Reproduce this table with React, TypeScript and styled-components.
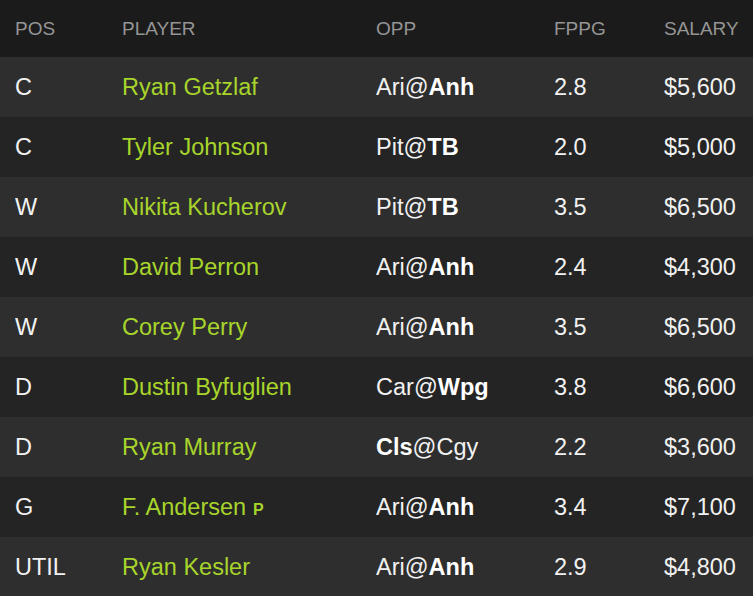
import React from "react";
import styled, { createGlobalStyle } from "styled-components";

const GlobalStyle = createGlobalStyle`
  html, body {
    margin: 0;
    padding: 0;
    background: #1b1b1b;
    font-family: "Liberation Sans", Arial, sans-serif;
  }
`;

type Player = {
  pos: string;
  name: string;
  away: string;
  home: string;
  homeBold: boolean;
  fppg: string;
  salary: string;
  badge?: string;
};

const players: Player[] = [
  { pos: "C", name: "Ryan Getzlaf", away: "Ari", home: "Anh", homeBold: true, fppg: "2.8", salary: "$5,600" },
  { pos: "C", name: "Tyler Johnson", away: "Pit", home: "TB", homeBold: true, fppg: "2.0", salary: "$5,000" },
  { pos: "W", name: "Nikita Kucherov", away: "Pit", home: "TB", homeBold: true, fppg: "3.5", salary: "$6,500" },
  { pos: "W", name: "David Perron", away: "Ari", home: "Anh", homeBold: true, fppg: "2.4", salary: "$4,300" },
  { pos: "W", name: "Corey Perry", away: "Ari", home: "Anh", homeBold: true, fppg: "3.5", salary: "$6,500" },
  { pos: "D", name: "Dustin Byfuglien", away: "Car", home: "Wpg", homeBold: true, fppg: "3.8", salary: "$6,600" },
  { pos: "D", name: "Ryan Murray", away: "Cls", home: "Cgy", homeBold: false, fppg: "2.2", salary: "$3,600" },
  { pos: "G", name: "F. Andersen", away: "Ari", home: "Anh", homeBold: true, fppg: "3.4", salary: "$7,100", badge: "P" },
  { pos: "UTIL", name: "Ryan Kesler", away: "Ari", home: "Anh", homeBold: true, fppg: "2.9", salary: "$4,800" },
];

export default function App() {
  return (
    <>
      <GlobalStyle />
      <Table>
        <HeaderRow>
          <span>POS</span>
          <span>PLAYER</span>
          <span>OPP</span>
          <span>FPPG</span>
          <span>SALARY</span>
        </HeaderRow>
        {players.map((p, i) => (
          <Row key={i} $light={i % 2 === 0}>
            <span>{p.pos}</span>
            <Name>
              {p.name}
              {p.badge && <Badge>{p.badge}</Badge>}
            </Name>
            <span>
              {p.homeBold ? p.away : <b>{p.away}</b>}@{p.homeBold ? <b>{p.home}</b> : p.home}
            </span>
            <span>{p.fppg}</span>
            <span>{p.salary}</span>
          </Row>
        ))}
      </Table>
    </>
  );
}

const Table = styled.div`
  width: 753px;
  display: flex;
  flex-direction: column;
`;

const Columns = styled.div`
  display: grid;
  grid-template-columns: 107px 254px 178px 110px 1fr;
  align-items: center;
  padding-left: 15px;
  box-sizing: border-box;
`;

const HeaderRow = styled(Columns)`
  height: 57px;
  background: #1b1b1b;
  color: #959595;
  font-size: 19px;
`;

const Row = styled(Columns)<{ $light: boolean }>`
  height: 60px;
  background: ${(p) => (p.$light ? "#2e2e2e" : "#242424")};
  color: #f2f2f2;
  font-size: 23.5px;

  b {
    font-weight: 700;
    color: #ffffff;
  }
`;

const Name = styled.span`
  color: #a8d52b;
  display: flex;
  align-items: baseline;
`;

const Badge = styled.span`
  font-size: 16px;
  font-weight: 700;
  margin-left: 7px;
`;
